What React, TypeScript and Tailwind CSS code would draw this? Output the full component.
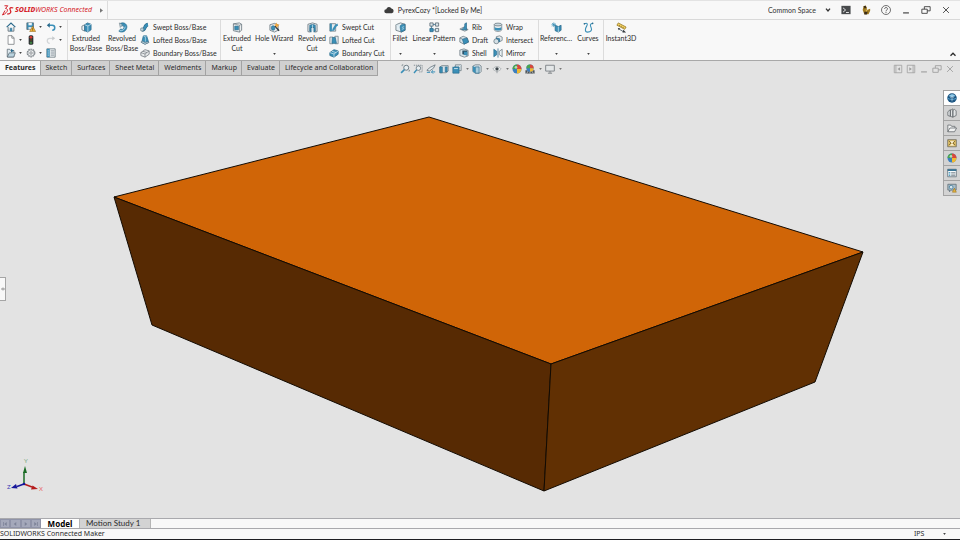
import { useState } from 'react'
import type { ReactNode } from 'react'

const BLUE = '#3a8fb7'
const DARK = '#5b6a73'
const PALE = '#b9d3df'
const NAVY = '#2a6a8c'

// every glyph is drawn on a 12 x 12 grid
const icons: Record<string, ReactNode> = {
  home: (
    <>
      <path d="M.8 6.200 6 1.200l5.200 5" fill="none" stroke={NAVY} strokeWidth="1.400" />
      <path d="M2.500 6v5h7V6" fill="#e9f1f5" stroke={DARK} />
      <path d="M5 11V7.500h2V11" fill={BLUE} stroke={NAVY} strokeWidth=".6" />
    </>
  ),
  save: (
    <>
      <path d="M1 1h8v8H1z" fill={BLUE} stroke={DARK} strokeWidth=".9" />
      <path d="M3 1h4v3H3z" fill="#eef4f7" />
      <path d="M3 6h4v3H3z" fill="#d9e4ea" />
      <path d="m8 5 3.600 6.400H4.400z" fill="#f3b43a" stroke="#8a6213" strokeWidth=".6" />
      <path d="M8 7.400v2M8 10v.7" stroke="#4a3408" strokeWidth=".8" />
    </>
  ),
  undo: (
    <>
      <path d="M2.500 4h5a3 3 0 0 1 0 6" fill="none" stroke={BLUE} strokeWidth="1.800" />
      <path d="M4.500 1 1 4l3.500 3z" fill={NAVY} />
    </>
  ),
  redo: (
    <>
      <path d="M9.500 4h-5a3 3 0 0 0 0 6" fill="none" stroke="#d3d6d8" strokeWidth="1.500" />
      <path d="M7.500 1.500 11 4 7.500 6.500z" fill="#c7cacc" />
    </>
  ),
  page: <path d="M2.500.8h4.700L9.700 3.500v7.700H2.500zM7 .8v3h2.700" fill="#fff" stroke="#73787c" strokeWidth=".9" />,
  traffic: (
    <>
      <rect x="3.200" y=".3" width="5.600" height="11.400" rx="1.800" fill="#2e3133" />
      <circle cx="6" cy="2.800" r="1.600" fill="#df3b2f" />
      <circle cx="6" cy="6" r="1.200" fill="#5d4b25" />
      <circle cx="6" cy="9.200" r="1.500" fill="#3f7f41" />
    </>
  ),
  open: (
    <>
      <path d="M1.500 10.800V1.500h3l1 1.500h4v7.800z" fill="#dce7ed" stroke={DARK} strokeWidth=".9" />
      <path d="m1.500 10.800 2.500-5h7.200l-2 5z" fill={PALE} stroke={DARK} strokeWidth=".9" />
      <path d="M6 1v4.500L9.500 3.200z" fill={NAVY} />
    </>
  ),
  gear: (
    <>
      <circle cx="6" cy="6" r="4.600" fill="#f1f2f2" stroke="#7b8287" strokeWidth="1.300" strokeDasharray="2.200 .7" />
      <circle cx="6" cy="6" r="3.600" fill="none" stroke="#8b9297" strokeWidth=".7" />
      <circle cx="6" cy="6" r="1.500" fill="none" stroke="#666d72" strokeWidth=".8" />
    </>
  ),
  list: (
    <>
      <path d="M1 1h10v10H1z" fill="#f4f8fa" stroke={DARK} strokeWidth=".9" />
      <path d="M1 1h3.500v10H1z" fill={BLUE} />
      <path d="M2 3.500h1.500M2 6h1.500M2 8.500h1.500" stroke="#fff" strokeWidth=".8" />
      <path d="M5.500 3.500H10M5.500 6H10M5.500 8.500H10" stroke={DARK} strokeWidth=".9" />
    </>
  ),
  extrude: (
    <>
      <path d="M1 4.500 4 3v7L1 8.500z" fill="#eef2f4" stroke={DARK} strokeWidth=".8" />
      <path d="m4 3 3-2 4 1.500v6L7.500 11 4 9.500z" fill={BLUE} stroke={NAVY} strokeWidth=".8" />
      <path d="m4 3 3.500 1.300L11 2.500M7.500 4.300V11" fill="none" stroke="#d6ebf4" strokeWidth=".8" />
    </>
  ),
  revolve: (
    <>
      <path d="M3.500 1.500C8-.5 12 3 10.500 7c-1.300 4-6 5-8.500 3l2-2.500c1.500 1 3 .5 3.500-1C8 4.500 6.500 3.500 5 4.500z" fill={BLUE} stroke={NAVY} strokeWidth=".7" />
      <path d="m2.500 1 3.500 2-2.500 3z" fill={PALE} stroke={DARK} strokeWidth=".5" />
      <path d="M3 9.500C6 10 8.500 8 9 5" fill="none" stroke="#bfe0ee" strokeWidth=".9" />
    </>
  ),
  sweep: (
    <>
      <path d="M2.500 9.500C7 10 4.500 4 9.500 3" fill="none" stroke={NAVY} strokeWidth="4" />
      <path d="M2.500 9.500C7 10 4.500 4 9.500 3" fill="none" stroke={BLUE} strokeWidth="2.900" />
      <circle cx="2.500" cy="9" r="2" fill={PALE} stroke={DARK} strokeWidth=".7" />
    </>
  ),
  loft: (
    <>
      <path d="M4 1h4l2.500 8L6 11 2 9z" fill={BLUE} stroke={NAVY} strokeWidth=".8" />
      <path d="M4 1 6.500 2.500 8 1M6.500 2.500V8" fill="none" stroke="#c4e2ef" strokeWidth=".8" />
      <path d="m1 8.500 2-1 3 1.500 4-1 .5 1L6 11.200z" fill={PALE} stroke={DARK} strokeWidth=".6" />
    </>
  ),
  boundary: (
    <>
      <path d="m1 5.500 5-3.500 5 1.500v4L6 11 1 9z" fill="#e8eaeb" stroke="#6d747a" strokeWidth=".9" />
      <path d="m1 5.500 5 1.700 5-3.700M6 7.200V11M3.500 4 8.500 5.500" fill="none" stroke="#6d747a" strokeWidth=".8" />
    </>
  ),
  boundaryCut: (
    <>
      <path d="m1 5.500 5-3.500 5 1.500v4L6 11 1 9z" fill={BLUE} stroke={NAVY} strokeWidth=".9" />
      <path d="m1 5.500 5 1.700 5-3.700M6 7.200V11M3.500 4 8.500 5.500" fill="none" stroke="#d4eaf3" strokeWidth=".9" />
    </>
  ),
  cut: (
    <>
      <path d="m1.500 2 6.500-1 2.500 1.500V9L8 11l-6.500-1.500z" fill="#eceff0" stroke={DARK} strokeWidth=".8" />
      <path d="M8.200 3.500V11M1.500 2l6.700 1.500 2.300-1" fill="none" stroke={DARK} strokeWidth=".6" />
      <path d="M3 4.500h4v4H3z" fill={BLUE} stroke={NAVY} strokeWidth=".7" />
    </>
  ),
  hole: (
    <>
      <path d="m1 3 5-1.500 4 1.500v6l-4 2-5-2z" fill="#e6ebed" stroke={DARK} strokeWidth=".8" />
      <ellipse cx="4.500" cy="6.500" rx="2" ry="2.500" fill={BLUE} stroke={NAVY} strokeWidth=".7" />
      <path d="m6.500 4.500 4.500 5" stroke="#30383d" strokeWidth="1.400" />
      <path d="m8 .5 1 2 2.500.5-2 1.500-.5 2-1.500-2L5.500 3l2-.5z" fill="#f2a63b" />
    </>
  ),
  revolveCut: (
    <>
      <path d="M1 2.500 6 1l5 1.500v8L8.500 11V6h-5v5L1 10.500z" fill="#e8edf0" stroke={DARK} strokeWidth=".8" />
      <path d="M3 3.500c2-1 4-1 6 0V10L7.500 11V6h-3v5L3 10z" fill={BLUE} stroke={NAVY} strokeWidth=".7" />
      <path d="M6 3v7" stroke="#cfe4ee" strokeWidth=".8" />
    </>
  ),
  sweepCut: (
    <>
      <path d="M1 2h7v9H1z" fill="#e5eaed" stroke={DARK} strokeWidth=".8" />
      <path d="M1 2h2.500v9H1z" fill={BLUE} />
      <path d="M4 9.500C7 10 5.500 4.500 10.500 3" fill="none" stroke={BLUE} strokeWidth="2.800" />
    </>
  ),
  loftCut: (
    <>
      <path d="M1 2.500h4v8H1zM7 1.500h4v9H7z" fill="#e5eaed" stroke={DARK} strokeWidth=".8" />
      <path d="M4 3h3.500L9 10H3.500z" fill={BLUE} stroke={NAVY} strokeWidth=".7" />
    </>
  ),
  fillet: (
    <>
      <path d="m1 3 5-2 5 1.500V9l-4 2-6-2z" fill="#e4eef3" stroke={DARK} strokeWidth=".8" />
      <path d="M5.500 5c0-1.500 2-3 5.500-2.500V9L6.500 11z" fill={BLUE} stroke={NAVY} strokeWidth=".7" />
      <path d="m1 3 4.500 2M7.500 6l2.500-1M7.500 8l2.500-1" fill="none" stroke="#d5e7ef" strokeWidth=".7" />
    </>
  ),
  pattern: (
    <>
      <path d="M1 1h3.500v3.500H1zM7 1h3.500v3.500H7zM7 7h3.500v3.500H7z" fill="#dce6eb" stroke={DARK} strokeWidth=".9" />
      <path d="M1 7h3.500v3.500H1z" fill={BLUE} stroke={NAVY} strokeWidth=".9" />
      <path d="M2.700 4.500V7M4.500 8.700H7M4.500 2.700H7" stroke={NAVY} strokeWidth=".8" />
    </>
  ),
  rib: (
    <>
      <path d="m1 8.500 4-2 6 2.500-4 2z" fill="#e0e6e9" stroke={DARK} strokeWidth=".8" />
      <path d="M9 1v8.500L3 9c3-1 4-4 4-7z" fill={BLUE} stroke={NAVY} strokeWidth=".8" />
    </>
  ),
  draft: (
    <>
      <path d="m1 3.500 4-2 5 2 1.500 5L6 11 1 8.500z" fill="#d9e4ea" stroke={DARK} strokeWidth=".8" />
      <path d="m4 5 5.500-1.500 2 5L6 11z" fill={BLUE} stroke={NAVY} strokeWidth=".8" />
      <path d="m1 3.500 3 1.500" stroke={DARK} strokeWidth=".8" />
    </>
  ),
  shell: (
    <>
      <path d="M1 2.500 6 1l5 2v6.500L6.500 11 1 9z" fill="#d9e4ea" stroke={DARK} strokeWidth=".8" />
      <path d="M4 3h6v6L4 7.500z" fill="#2a5269" />
      <path d="M6 4.500h4V9L6 8z" fill={BLUE} />
    </>
  ),
  wrap: (
    <>
      <path d="M1.500 3v6c0 3 9 3 9 0V3z" fill="#e7ecee" stroke={DARK} strokeWidth=".8" />
      <ellipse cx="6" cy="3" rx="4.500" ry="1.700" fill="#cfdbe1" stroke={DARK} strokeWidth=".8" />
      <path d="M2 6c1 1.500 7 1.500 8 0v3c-1 1.500-7 1.500-8 0z" fill={BLUE} />
    </>
  ),
  intersect: (
    <>
      <path d="m4 2 4-1 3 1.500v4L8 8 4 6.500z" fill="#e7ecee" stroke={DARK} strokeWidth=".8" />
      <circle cx="4" cy="7.500" r="3" fill="#d4e0e6" stroke={DARK} strokeWidth=".8" />
      <path d="M4 3.500 8 4.500V8H7A3 3 0 0 0 4 4.500z" fill={BLUE} stroke={NAVY} strokeWidth=".8" />
    </>
  ),
  mirror: (
    <>
      <path d="M1 1.500 4.500 4v4L1 10.500z" fill={BLUE} stroke={NAVY} strokeWidth=".8" />
      <path d="M11 1.500 7.500 4v4l3.500 2.500z" fill="#eaf1f4" stroke={DARK} strokeWidth=".8" />
      <path d="M6 .5v11" stroke={NAVY} strokeWidth=".9" />
    </>
  ),
  reference: (
    <>
      <path d="M4.500 3.500 8 5l3-1.500V9L8 11 4.500 9.500z" fill={BLUE} stroke={NAVY} strokeWidth=".8" />
      <path d="M8 5v6" stroke="#cbe5f0" strokeWidth=".8" />
      <path d="M3 .5v5M.5 3h5M1.200 1.200l3.600 3.600M4.800 1.200 1.200 4.800" stroke={BLUE} strokeWidth=".8" />
    </>
  ),
  curves: (
    <>
      <path d="M1.500 2c3-1.500 4 0 2.500 2.500S1.500 11 5 11s5-2 4-4.500S7 2 10.500 1.500" fill="none" stroke={BLUE} strokeWidth="1.200" />
      <circle cx="1.500" cy="2" r=".9" fill={NAVY} />
      <circle cx="10.500" cy="1.500" r=".9" fill={NAVY} />
    </>
  ),
  instant: (
    <>
      <path d="M1 3.500 2.500 1l8.500 4.500L9.500 8z" fill="#f2d264" stroke="#927018" strokeWidth=".8" />
      <path d="m4 3.200-.5 1.200M6 4.200l-.5 1.200M8 5.400l-.5 1.200" stroke="#6b5112" strokeWidth=".7" />
      <path d="m3 7.500 5 3" stroke={DARK} />
      <path d="m8 8.500 3 3H7zM2 6.500l2.500.3L3 9z" fill="#33393d" />
    </>
  ),
  zoomFit: (
    <>
      <circle cx="7.500" cy="4.500" r="3" fill="#e7eff3" stroke={DARK} />
      <path d="m5.300 6.700-4 4" stroke={BLUE} strokeWidth="1.900" />
      <path d="M10 8.500h1.500V7M4 1H2.500v1.500" fill="none" stroke={DARK} strokeWidth=".7" />
    </>
  ),
  zoomArea: (
    <>
      <path d="M1 1.500h10v8H7" fill="none" stroke={DARK} strokeWidth=".8" strokeDasharray="1.500 1" />
      <circle cx="6.500" cy="5" r="2.700" fill="#e7eff3" stroke={DARK} strokeWidth=".9" />
      <path d="m4.500 7-3.300 3.800" stroke={BLUE} strokeWidth="1.700" />
    </>
  ),
  prevView: (
    <>
      <path d="M1 7.500 5 4l6-3-2 4-5 3.500z" fill="#e5edf1" stroke={DARK} strokeWidth=".9" />
      <path d="M1 10h4M6.500 9.500H11M8.500 7.500l-2 2 2 2" fill="none" stroke={BLUE} strokeWidth="1.200" />
    </>
  ),
  section: (
    <>
      <path d="M1 3.500 3.500 2H11v6.500L8.500 10.500H1z" fill="#d6e2e8" stroke={DARK} strokeWidth=".8" />
      <path d="M1 3.500h3v7H1zM7.500 3.500h2.300v6H7.500z" fill={BLUE} stroke={NAVY} strokeWidth=".7" />
    </>
  ),
  viewOrient: (
    <>
      <path d="M4 1h7v7H4z" fill="#dce5e9" stroke={DARK} strokeWidth=".8" />
      <path d="M1 3.500h7.500V11H1z" fill={BLUE} stroke={NAVY} strokeWidth=".8" />
      <path d="m1 3.500 2-2M8.500 3.500l2-2M2.500 5.500h4.500" stroke="#e0eef4" />
    </>
  ),
  display: (
    <>
      <path d="M1 2.500 4 1h5l2 1.500v6.500L9 11H4L1 9z" fill="#d6e2e8" stroke={DARK} strokeWidth=".8" />
      <path d="M4 3.500h4.500V11H4z" fill="#a9cddc" stroke={NAVY} strokeWidth=".8" />
      <path d="M1 2.500 4 4v7L1 9z" fill={BLUE} />
    </>
  ),
  eye: (
    <>
      <path d="M1 6c3-4 7-4 10 0-3 3.500-7 3.500-10 0z" fill="#edf0f1" stroke="#9a9fa2" strokeWidth=".8" />
      <circle cx="6" cy="5.800" r="2" fill="#3e464b" />
      <path d="M6 8v3" stroke="#8a9195" />
    </>
  ),
  appearance: (
    <>
      <circle cx="6" cy="6" r="5.400" fill="#3c7fbf" />
      <path d="M6 6V.6A5.400 5.400 0 0 0 .6 6z" fill="#4aa54e" />
      <path d="M6 6h5.400A5.400 5.400 0 0 0 6 .6z" fill="#d8483b" />
      <path d="M6 6v5.400A5.400 5.400 0 0 0 11.400 6z" fill="#efb932" />
      <circle cx="4.800" cy="4" r="1.600" fill="#fff" opacity=".6" />
    </>
  ),
  scene: (
    <>
      <path d="M.5 7.500h11v4H.5z" fill="#4d5357" />
      <path d="M2 11.500 4 8M6 11.500V8M10 11.500 8 8" stroke="#d9dcde" strokeWidth=".8" />
      <circle cx="6" cy="5" r="4.300" fill="#3c7fbf" />
      <path d="M6 5V.7A4.300 4.300 0 0 0 1.700 5z" fill="#4aa54e" />
      <path d="M6 5h4.300A4.300 4.300 0 0 0 6 .7z" fill="#d8483b" />
      <path d="M6 5v4.300A4.300 4.300 0 0 0 10.300 5z" fill="#efb932" />
    </>
  ),
  monitor: (
    <>
      <path d="M.8 1.500h10.400v7H.8z" fill="#e4e7e8" stroke="#7b8185" strokeWidth="1.100" />
      <path d="M6 8.500v2M3.500 11h5" stroke="#7b8185" strokeWidth="1.200" />
    </>
  ),
  sphere: (
    <>
      <circle cx="6" cy="6" r="5.700" fill="#1c5582" />
      <path d="M2 3.500c3-3 6-2.500 8 0-2 1.500-6 1.500-8 0z" fill="#8cc8e8" />
      <path d="M.8 6.500c3 1.500 7 1.500 10.400 0" fill="none" stroke="#5aa6d2" strokeWidth="1.200" />
      <path d="M6 4v6M4 6l2-2 2 2" fill="none" stroke="#dff0f9" strokeWidth=".7" />
    </>
  ),
  library: <path d="M1 4.500 4 2v8l-3-1zM4 3l3-2v10l-3-1zM7 3l2-1.500 2 2V9l-4 2z" fill="#e3e5e6" stroke="#5c6266" strokeWidth=".9" />,
  folder: <path d="M1 10.500v-8h3.500l1 1.500h4v2M1 10.500 3.500 6h8L9 10.500z" fill="#f3f4f4" stroke="#5c6266" strokeWidth=".9" />,
  palette: (
    <>
      <path d="M.8 2h10.400v8.500H.8z" fill="#e2c36b" stroke="#69675d" strokeWidth=".9" />
      <path d="m2 3.500 3 2.500-3 2.500M10 3.500 7 6l3 2.500" fill="none" stroke="#715c22" />
      <path d="M3.500 4h5L6 6.500zM3.500 9h5L6 6.500z" fill="#f8f3df" />
    </>
  ),
  props: (
    <>
      <path d="M.8 1.500h10.400v9H.8z" fill="#f7fafb" stroke={DARK} strokeWidth=".9" />
      <path d="M.8 1.500h10.400v2H.8z" fill={NAVY} />
      <path d="M2 5.500h2M2 7.300h2M2 9.100h2" stroke={BLUE} strokeWidth="1.100" />
      <path d="M5 5.500h5M5 7.300h5M5 9.100h5" stroke={DARK} strokeWidth=".8" />
    </>
  ),
  forum: (
    <>
      <path d="M1 1.500h10v7H5l-2 2v-2H1z" fill="#a7bcc7" stroke={DARK} strokeWidth=".9" />
      <circle cx="5" cy="5" r="2.200" fill="#d8e7ee" stroke={NAVY} strokeWidth=".8" />
      <path d="M6.500 11 8.800 6l2.400 5z" fill="#e5b33d" stroke="#8f6b18" strokeWidth=".6" />
    </>
  ),
  cloud: <path d="M3 10a2.500 2.500 0 0 1-.3-5A3.400 3.400 0 0 1 9 4.300 2.900 2.900 0 0 1 9.300 10z" fill="#3c3c3c" />,
  terminal: (
    <>
      <path d="M.5 1h11v10H.5z" fill="#484a4c" />
      <path d="m2.500 3.500 3 2.500-3 2.500M6 9h3.500" fill="none" stroke="#fff" />
    </>
  ),
  user: (
    <>
      <path d="M3 1.500 5.500.5 7 3v3l4-1.500V7l-2 4H4L2 6z" fill="#a17b20" />
      <path d="M3 1.500 5.500 1l1 2-2 1.500zM4 8h4l-1 3.500H4z" fill="#3a2c18" />
      <path d="m5.500 5.500 2.500 1-2 1.500z" fill="#ddb653" />
    </>
  ),
  help: (
    <>
      <circle cx="6" cy="6" r="5.400" fill="none" stroke="#444" strokeWidth=".9" />
      <path d="M4.300 4.700C4.300 2.500 7.800 2.500 7.800 4.600 7.800 6 6 5.800 6 7.500M6 8.300v1.200" fill="none" stroke="#444" />
    </>
  ),
  minimize: <path d="M2.500 9.500h7" stroke="currentColor" strokeWidth="1.300" />,
  restore: <path d="M1 5h6.500v5H1zM4 5V2h7v5H7.500" fill="none" stroke="currentColor" />,
  close: <path d="m2.500 2.500 7 7M9.500 2.500l-7 7" stroke="currentColor" />,
  paneLeft: (
    <>
      <path d="M1.500 1.500h9v9h-9zM3.500 1.500v9" fill="none" stroke="currentColor" strokeWidth=".9" />
      <path d="M8.500 4 5.500 6l3 2z" fill="currentColor" />
    </>
  ),
  paneRight: (
    <>
      <path d="M1.500 1.500h9v9h-9zM8.500 1.500v9" fill="none" stroke="currentColor" strokeWidth=".9" />
      <path d="m4 4 3 2-3 2z" fill="currentColor" />
    </>
  ),
  chevron: <path d="m3 4 3 3.500L9 4" fill="none" stroke="currentColor" strokeWidth="2" />,
  collapse: <path d="m3 8 3-3 3 3" fill="none" stroke="currentColor" strokeWidth="1.600" />,
  first: <path d="M9.500 2 4.500 6l5 4zM2 2h1.500v8H2z" fill="currentColor" />,
  prev: <path d="M8.500 2 3.500 6l5 4z" fill="currentColor" />,
  next: <path d="m3.500 2 5 4-5 4z" fill="currentColor" />,
  last: <path d="m2.500 2 5 4-5 4zM8.500 2H10v8H8.500z" fill="currentColor" />,
}

function Icon({ name, className = 'size-2.5' }: { name: string; className?: string }) {
  return (
    <svg viewBox="0 0 12 12" className={`shrink-0 ${className}`} aria-hidden="true">
      {icons[name]}
    </svg>
  )
}

function Caret({ className = 'text-[#444]' }: { className?: string }) {
  return (
    <svg viewBox="0 0 4 3" className={`h-0.5 w-[3px] shrink-0 ${className}`} aria-hidden="true">
      <path d="M0 0h4L2 3z" fill="currentColor" />
    </svg>
  )
}

function BigButton({ icon, lines, width, menu }: { icon: string; lines: string[]; width: string; menu?: boolean }) {
  return (
    <button className={`flex h-full flex-col items-center pt-0.5 whitespace-nowrap ${width}`}>
      <Icon name={icon} className="size-[11px]" />
      <span className="leading-[10px]">
        {lines.map((line) => (
          <span key={line} className="block">{line}</span>
        ))}
      </span>
      {menu && <span className="mt-2.5"><Caret /></span>}
    </button>
  )
}

function SmallColumn({ items, width = '' }: { items: string[][]; width?: string }) {
  return (
    <div className={`grid grid-rows-3 ${width}`}>
      {items.map(([icon, label]) => (
        <button key={label} className="flex h-[13px] items-center gap-[3px] whitespace-nowrap">
          <Icon name={icon} />
          {label}
        </button>
      ))}
    </div>
  )
}

function Group({ children, className = '' }: { children: ReactNode; className?: string }) {
  return <div className={`flex h-full border-r border-[#dcdcdc] ${className}`}>{children}</div>
}

const quick = [
  ['home', ''], ['save', 'menu'], ['undo', 'menu'],
  ['page', 'menu'], ['traffic', ''], ['redo', 'menu'],
  ['open', 'menu'], ['gear', 'menu'], ['list', ''],
]

const tabs = ['Features', 'Sketch', 'Surfaces', 'Sheet Metal', 'Weldments', 'Markup', 'Evaluate', 'Lifecycle and Collaboration']

const headsUp = [
  ['zoomFit', ''], ['zoomArea', ''], ['prevView', ''], ['section', ''], ['viewOrient', 'menu'],
  ['display', 'menu'], ['eye', 'menu'], ['appearance', ''], ['scene', 'menu'], ['monitor', 'menu'],
]

const taskPane = ['sphere', 'library', 'folder', 'palette', 'appearance', 'props', 'forum']

function TitleBar() {
  return (
    <header className="flex h-5 shrink-0 items-center border-t border-b border-t-[#e3e3e3] border-b-[#d9d9d9] bg-[#f8f8f8]">
      <div className="flex h-full w-27 items-center border-r border-[#dcdcdc] text-[#d5232b]">
        <svg viewBox="0 0 24 22" className="ml-0.5 h-[11px] w-3" aria-label="3DS">
          <path d="M5 1.500h6.500L7 7c5 0 5 5 1 8.500-2 2-4 3.500-7 4.500l5-9" fill="none" stroke="currentColor" strokeWidth="2" />
          <path d="M22.500 6c-5-2-8.500 0-6 4 2.500 4 1 8-6 8" fill="none" stroke="currentColor" strokeWidth="2.600" />
        </svg>
        <span className="ml-px font-['Noto_Sans',sans-serif] whitespace-nowrap italic"><b className="font-extrabold">SOLID</b>WORKS Connected</span>
        <button aria-label="Show menu" className="mr-1 ml-auto">
          <svg viewBox="0 0 4 6" className="h-[5px] w-[3px]"><path d="M0 0v6l4-3z" fill="#777" /></svg>
        </button>
      </div>
      <div className="flex flex-1 items-center justify-center gap-1 pr-2.5">
        <Icon name="cloud" />
        <h1>PyrexCozy *[Locked By Me]</h1>
      </div>
      <div className="flex items-center text-[#333]">
        <div className="relative flex items-center">
          <select aria-label="Space" className="h-3.5 w-17 appearance-none bg-transparent leading-[14px] outline-none"><option>Common Space</option></select>
          <span className="pointer-events-none absolute right-1"><Icon name="chevron" className="size-2" /></span>
        </div>
        {['terminal', 'user', 'help', 'minimize', 'restore', 'close'].map((name) => (
          <button key={name} aria-label={name} className="flex w-5 justify-center"><Icon name={name} /></button>
        ))}
        <span className="w-1" />
      </div>
    </header>
  )
}

function Ribbon() {
  return (
    <div className="flex h-[41px] shrink-0 items-start border-b border-[#a8a8a8] bg-[#f8f8f8]">
      <Group className="w-17 pl-1.5">
        <div className="grid grid-cols-[20px_20px_20px]">
          {quick.map(([name, menu]) => (
            <button key={name} aria-label={name} className="flex h-[13px] items-center gap-[3px]">
              <Icon name={name} />
              {menu && <Caret />}
            </button>
          ))}
        </div>
      </Group>
      <Group className="w-[153px]">
        <BigButton icon="extrude" lines={['Extruded', 'Boss/Base']} width="w-9" />
        <BigButton icon="revolve" lines={['Revolved', 'Boss/Base']} width="w-9" />
        <SmallColumn items={[['sweep', 'Swept Boss/Base'], ['loft', 'Lofted Boss/Base'], ['boundary', 'Boundary Boss/Base']]} />
      </Group>
      <Group className="w-[170px]">
        <BigButton icon="cut" lines={['Extruded', 'Cut']} width="w-8" />
        <BigButton icon="hole" lines={['Hole Wizard']} width="w-[42px]" menu />
        <BigButton icon="revolveCut" lines={['Revolved', 'Cut']} width="w-[34px]" />
        <SmallColumn items={[['sweepCut', 'Swept Cut'], ['loftCut', 'Lofted Cut'], ['boundaryCut', 'Boundary Cut']]} />
      </Group>
      <Group className="w-[148px]">
        <BigButton icon="fillet" lines={['Fillet']} width="w-[18px]" menu />
        <BigButton icon="pattern" lines={['Linear Pattern']} width="w-[50px]" menu />
        <SmallColumn items={[['rib', 'Rib'], ['draft', 'Draft'], ['shell', 'Shell']]} width="w-[34px]" />
        <SmallColumn items={[['wrap', 'Wrap'], ['intersect', 'Intersect'], ['mirror', 'Mirror']]} />
      </Group>
      <Group className="w-[65px]">
        <BigButton icon="reference" lines={['Referenc...']} width="w-[34px]" menu />
        <BigButton icon="curves" lines={['Curves']} width="w-[30px]" menu />
      </Group>
      <BigButton icon="instant" lines={['Instant3D']} width="w-[34px]" />
      <button aria-label="Collapse ribbon" className="mr-0.5 ml-auto self-end pb-px"><Icon name="collapse" /></button>
    </div>
  )
}

function TabRow() {
  const [active, setActive] = useState('Features')
  return (
    <div className="flex h-[15px] shrink-0 items-center">
      <nav className="flex h-full border-b border-[#a3a3a3] font-['Noto_Sans',sans-serif]">
        {tabs.map((tab) => (
          <button
            key={tab}
            onClick={() => setActive(tab)}
            className={`border-r border-[#a3a3a3] pr-1 pl-[5px] whitespace-nowrap ${active === tab ? 'bg-[#f8f8f8] font-bold' : 'bg-[#d0d0d0]'}`}
          >
            {tab}
          </button>
        ))}
      </nav>
      <div className="ml-[22px] flex items-center gap-[3px]">
        {headsUp.map(([name, menu]) => (
          <button key={name} aria-label={name} className={`flex items-center gap-1 ${menu ? 'w-[17px]' : 'w-2.5'}`}>
            <Icon name={name} />
            {menu && <Caret className="text-[#777]" />}
          </button>
        ))}
      </div>
      <div className="mr-[5px] ml-auto flex gap-[3px] text-[#9b9b9b]">
        {['paneLeft', 'paneRight', 'minimize', 'restore', 'close'].map((name) => (
          <button key={name} aria-label={name}><Icon name={name} /></button>
        ))}
      </div>
    </div>
  )
}

function Viewport() {
  return (
    <main className="relative min-h-0 flex-1">
      <svg viewBox="0 0 960 442" className="block size-full" aria-label="Solid model">
        <g stroke="#120a02" strokeWidth="1" strokeLinejoin="round">
          <path d="M429 41 863 176 551 288 114 121z" fill="#d06507" />
          <path d="M114 121 551 288 544 415 152 249z" fill="#572a03" />
          <path d="M551 288 863 176 815 306 544 415z" fill="#613003" />
        </g>
        <g strokeWidth="1.500">
          <path d="M24 408V396" stroke="#1a6b25" />
          <path d="m25 390 2 7h-4z" fill="#1a6b25" />
          <path d="m24 408 8 3" stroke="#b51c1c" />
          <path d="m38 413-7 .5 1.500-4z" fill="#b51c1c" />
          <path d="m24 408-7 2.500" stroke="#16169a" />
          <path d="m11 412 5-4 1.500 4.500z" fill="#16169a" />
          <circle cx="24" cy="408" r="1.300" fill="#16169a" />
        </g>
        <g fontSize="6">
          <text x="24" y="387" fill="#7ca982">Y</text>
          <text x="39" y="415" fill="#e86a6a">X</text>
          <text x="7" y="413" fill="#3a3ab5">Z</text>
        </g>
      </svg>
      <button aria-label="Show feature tree" className="absolute top-[201px] left-0 flex h-6 w-1.5 items-center justify-center border border-l-0 border-[#a5a5a5] bg-[#f8f8f8]">
        <svg viewBox="0 0 4 4" className="size-1"><path d="M0 2h4M2 .5v3" stroke="#999" /></svg>
      </button>
      <aside className="absolute top-3.5 right-0 w-[17px] border-t border-l border-[#a3a3a3]">
        {taskPane.map((name) => (
          <button
            key={name}
            aria-label={name}
            className={`flex h-[15px] w-full items-center justify-center border-b border-[#a3a3a3] ${name === 'sphere' ? 'bg-white' : 'bg-[#d3d3d3]'}`}
          >
            <Icon name={name} />
          </button>
        ))}
      </aside>
    </main>
  )
}

export default function App() {
  return (
    <div className="flex h-screen flex-col overflow-hidden border-b border-[#1e1e22] bg-[#e3e3e3] font-['Lato','Noto_Sans',sans-serif] text-[7px] leading-[10px] text-[#2b2b2b]">
      <TitleBar />
      <Ribbon />
      <TabRow />
      <Viewport />
      <div className="flex h-[11px] shrink-0 border-y border-[#a9a9ad] bg-[#f8f8f8] text-[8px]">
        <div className="flex w-[41px] bg-[#a4a8ba] text-[#7d8298]">
          {['first', 'prev', 'next', 'last'].map((name) => (
            <button key={name} aria-label={name} className="flex flex-1 items-center justify-center border border-[#8f93a8]">
              <Icon name={name} className="size-1.5" />
            </button>
          ))}
        </div>
        <button className="w-[38px] bg-white font-['Noto_Sans',sans-serif] leading-[9px] font-bold text-black">Model</button>
        <button className="border-x border-[#b5b5b5] bg-[#d3d3d3] pr-2.5 pl-1.5 leading-[9px]">Motion Study 1</button>
      </div>
      <footer className="flex h-2.5 shrink-0 items-center justify-between bg-[#f8f8f8] font-['Noto_Sans',sans-serif]">
        <span>SOLIDWORKS Connected Maker</span>
        <div className="relative mr-3.5 flex items-center">
          <select aria-label="Units" className="h-2.5 w-8 appearance-none bg-transparent leading-[10px] outline-none"><option>IPS</option></select>
          <span className="pointer-events-none absolute right-0"><Caret /></span>
        </div>
      </footer>
    </div>
  )
}
